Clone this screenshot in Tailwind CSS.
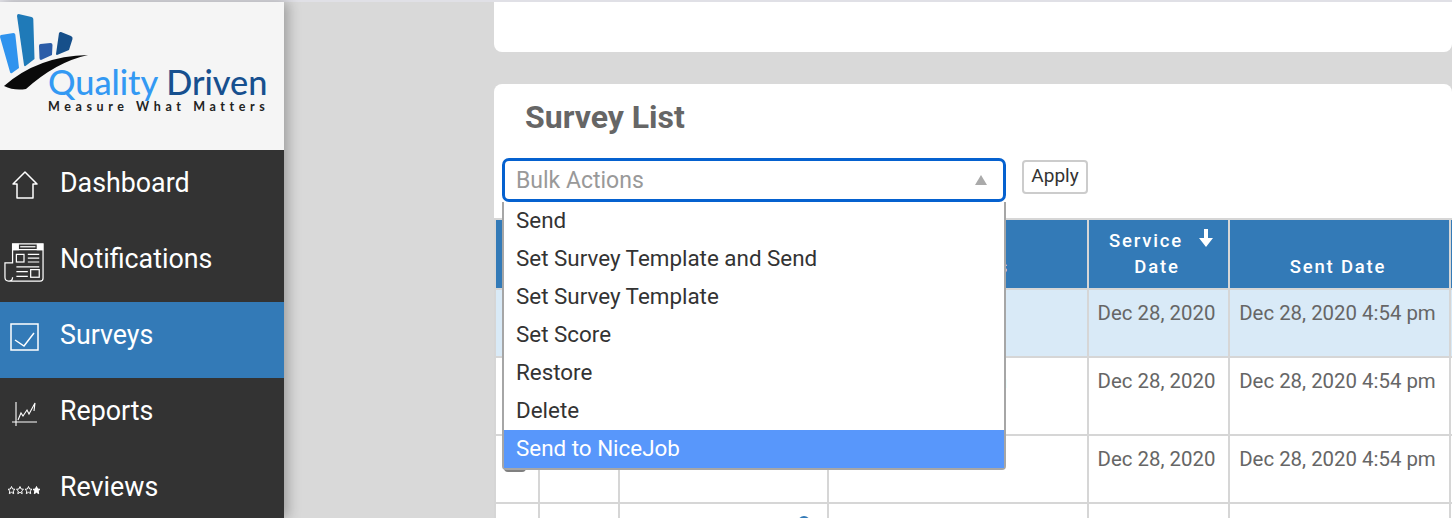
<!DOCTYPE html>
<html lang="en">
<head>
    <meta charset="UTF-8" />
    <meta name="viewport" content="width=device-width, initial-scale=1" />
    <title>Survey List</title>
    <script src="https://cdn.jsdelivr.net/npm/@tailwindcss/browser@4"></script>
</head>
<body class="h-[518px] overflow-hidden bg-[#d9d9d9] font-['Roboto',sans-serif]">
    <div class="h-[2px] bg-[#e0e0e6]"></div>
    <div class="flex h-[516px]">
        <!-- sidebar -->
        <aside class="w-[284px] shrink-0 overflow-hidden bg-[#333333] shadow-[4px_0_12px_rgba(0,0,0,0.28)] z-10">
            <div class="relative h-[148px] bg-[#f5f5f5] pl-[48px] pt-[65px]">
                <svg class="absolute left-0 top-0" width="92" height="90" viewBox="0 0 92 90">
                    <path d="M1 33 L13.500 31 Q15 31 15.300 32.500 L19 66 L12 71 Q10.500 72 10 70 L0 35 Q0 33 1 33 Z" fill="#2f93ee" />
                    <path d="M18.500 12 L31.500 15 Q33.300 15.500 33.300 17 L34.500 57 L25.500 64 Q24 64.500 24 63 L17 14 Q17 12 18.500 12 Z" fill="#1f7ab8" />
                    <path d="M40.500 42 L50.500 41 Q52.500 41 52.500 43 L52 53 L41 58 Q39.500 58 39.500 56 L39 44 Q39 42 40.500 42 Z" fill="#2b5ca8" />
                    <path d="M61 30 L71 34 Q73 35 72.500 37 L69 48 L57 53 Q56 53 56 52 L59 31 Q60 29.500 61 30 Z" fill="#164f8a" />
                    <path d="M4 84 Q38 54 88 53 Q56 60 26 87 Q14 89 4 84 Z" fill="#0a0a0a" />
                </svg>
                <div class="relative font-['Lato',sans-serif] text-[34.300px] leading-[30px] font-medium whitespace-nowrap"><span class="text-[#3399f3]">Quality</span> <span class="text-[#17508f]">Driven</span></div>
                <div class="relative mt-[2px] font-['Lato',sans-serif] text-[12.500px] leading-[16px] font-bold tracking-[4.600px] text-[#222222] whitespace-nowrap">Measure What Matters</div>
            </div>
            <nav class="text-white text-[26.800px]">
                <a class="flex h-[76px] items-center" href="#">
                    <span class="flex w-[60px] justify-center pr-[11px]">
                        <svg class="mb-[6px]" width="26" height="28" viewBox="0 0 26 28" fill="none" stroke="white" stroke-width="1.500"><path d="M13 1 L25 13 H21 V27 H5 V13 H1 Z" stroke-linejoin="round" /></svg>
                    </span>
                    <span class="pb-[10px]">Dashboard</span>
                </a>
                <a class="flex h-[76px] items-center" href="#">
                    <span class="flex w-[60px] justify-center pr-[12px]">
                        <svg class="mb-[4px]" width="40" height="40" viewBox="0 0 42 42" fill="none" stroke="white" stroke-width="1.300">
                            <path d="M9 2 H41 V38 Q41 41 38 41 H5 Q1 41 1 37 V22 H9 Z M9 37 Q9 41 5 41" />
                            <path d="M9 8 H41" />
                            <path d="M9.500 2.500 H15 V8 H9.500 Z M35 2.500 H40.500 V8 H35 Z" fill="white" />
                            <path d="M17 5 H33" />
                            <rect x="13" y="13" width="8" height="8" />
                            <path d="M25 13 H37 M25 17 H37 M25 21 H37 M13 26 H37 M13 31 H25 M13 36 H25" />
                            <rect x="28" y="29" width="9" height="8" />
                        </svg>
                    </span>
                    <span class="pb-[10px]">Notifications</span>
                </a>
                <a class="flex h-[76px] items-center bg-[#337ab7]" href="#">
                    <span class="flex w-[60px] justify-center pr-[12px]">
                        <svg class="mb-[7px]" width="29" height="28" viewBox="0 0 29 28" fill="none" stroke="white" stroke-width="1.500"><rect x="1" y="1" width="27" height="26" /><path d="M5 17 L14 23 L24 10" /></svg>
                    </span>
                    <span class="pb-[10px]">Surveys</span>
                </a>
                <a class="flex h-[76px] items-center" href="#">
                    <span class="flex w-[60px] justify-center pr-[11px]">
                        <svg class="mb-[4px]" width="26" height="26" viewBox="0 0 26 26" fill="none" stroke="white" stroke-width="1.100"><path d="M4 1 V25 M0 21 H25" /><path d="M6 19 L9 12 L11 15 L15 9 L17 13 L23 2 L22 10" /></svg>
                    </span>
                    <span class="pb-[10px]">Reports</span>
                </a>
                <a class="flex h-[76px] items-center" href="#">
                    <span class="flex w-[60px] justify-center pr-[13px]">
                        <svg class="mb-[4px]" width="34" height="11" viewBox="0 0 34 11" fill="none" stroke="white" stroke-width="1">
                            <path d="M4.500 1.500 L5.600 4 L8 4.300 L6.200 6 L6.700 8.700 L4.500 7.300 L2.300 8.700 L2.800 6 L1 4.300 L3.400 4 Z" />
                            <path d="M13 1.500 L14.100 4 L16.500 4.300 L14.700 6 L15.200 8.700 L13 7.300 L10.800 8.700 L11.300 6 L9.500 4.300 L11.900 4 Z" />
                            <path d="M21.500 1.500 L22.600 4 L25 4.300 L23.200 6 L23.700 8.700 L21.500 7.300 L19.300 8.700 L19.800 6 L18 4.300 L20.400 4 Z" />
                            <path d="M29.500 1.500 L30.600 4 L33 4.300 L31.200 6 L31.700 8.700 L29.500 7.300 L27.300 8.700 L27.800 6 L26 4.300 L28.400 4 Z" fill="white" />
                        </svg>
                    </span>
                    <span class="pb-[10px]">Reviews</span>
                </a>
            </nav>
        </aside>

        <!-- main -->
        <main class="relative flex-1 min-w-0 overflow-hidden pl-[210px]">
            <div class="h-[50px] rounded-b-lg bg-white"></div>
            <div class="mt-[32px] overflow-hidden rounded-t-lg bg-white">
                <h1 class="pl-[31px] pt-[14px] text-[32px] leading-[38px] font-bold text-[#666666]">Survey List</h1>
                <div class="h-[82px]"></div>
                <table class="w-[1155px] table-fixed border-separate border-spacing-0 text-[20.400px] text-[#666666]">
                    <colgroup>
                        <col class="w-[44px]" /><col class="w-[80px]" /><col class="w-[209px]" /><col class="w-[260px]" /><col class="w-[141px]" /><col class="w-[221px]" /><col class="w-[200px]" />
                    </colgroup>
                    <thead class="bg-[#337ab7] text-white text-[18.500px] tracking-[1.800px]">
                        <tr class="h-[70px] [&>th]:border-l-2 [&>th]:border-t-2 [&>th]:border-[#d6d6d6] [&>th]:align-bottom [&>th]:pb-[8px] [&>th]:pr-[3px] [&>th]:font-medium [&>th]:leading-[26px]">
                            <th></th><th></th><th></th>
                            <th>Recipients</th>
                            <th>
                                <span class="flex items-center justify-center gap-[16px] pl-[8px]">Service
                                    <svg class="mb-[6px]" width="14" height="19" viewBox="0 0 14 19" fill="white"><path d="M5 0 H9 V9 H14 L7 18 L0 9 H5 Z" /></svg>
                                </span>
                                Date
                            </th>
                            <th>Sent Date</th>
                            <th></th>
                        </tr>
                    </thead>
                    <tbody class="[&_td]:border-l-2 [&_td]:border-t-2 [&_td]:border-[#d6d6d6] [&_td]:align-top [&_td]:pt-[11px] [&_td]:pr-[4px] [&_td]:text-center [&_td]:leading-[24px]">
                        <tr class="h-[68px] bg-[#d9eaf7]">
                            <td><span class="mx-auto mt-[3px] block h-[22px] w-[22px] rounded-[4px] border-2 border-[#808080]"></span></td>
                            <td></td><td></td><td></td><td>Dec 28, 2020</td><td>Dec 28, 2020 4:54 pm</td><td></td>
                        </tr>
                        <tr class="h-[78px]">
                            <td><span class="mx-auto mt-[3px] block h-[22px] w-[22px] rounded-[4px] border-2 border-[#808080]"></span></td>
                            <td></td><td></td><td class="!pr-[80px] !text-right">n</td><td>Dec 28, 2020</td><td>Dec 28, 2020 4:54 pm</td><td></td>
                        </tr>
                        <tr class="h-[68px]">
                            <td><span class="mx-auto mt-[3px] block h-[22px] w-[22px] rounded-[4px] border-2 border-[#808080]"></span></td>
                            <td></td><td></td><td></td><td>Dec 28, 2020</td><td>Dec 28, 2020 4:54 pm</td><td></td>
                        </tr>
                        <tr class="h-[68px]">
                            <td></td><td></td>
                            <td class="!pr-[17px]"><span class="mt-[1px] ml-auto block h-[12px] w-[12px] rounded-full bg-[#337ab7]"></span></td>
                            <td></td><td></td><td></td><td></td>
                        </tr>
                    </tbody>
                </table>
            </div>

            <!-- bulk action select + open dropdown, sits over the table -->
            <div class="absolute left-[218px] top-[156px] w-[504px] text-[22.400px]">
                <div class="flex h-[44px] items-center justify-between rounded-[7px] border-[3px] border-[#0561cf] bg-white pl-[11px] pr-[16px] text-[#999999]">
                    <span class="pt-[2px] text-[23px]">Bulk Actions</span>
                    <span class="h-0 w-0 border-x-[6.500px] border-b-[10px] border-x-transparent border-b-[#aaaaaa]"></span>
                </div>
                <ul class="rounded-b-[4px] border-x-2 border-b-2 border-[#a6a6a6] bg-white text-[#333333] [&>li]:flex [&>li]:h-[38px] [&>li]:items-center [&>li]:pl-[12px]">
                    <li>Send</li>
                    <li>Set Survey Template and Send</li>
                    <li>Set Survey Template</li>
                    <li>Set Score</li>
                    <li>Restore</li>
                    <li>Delete</li>
                    <li class="bg-[#5897fb] text-white">Send to NiceJob</li>
                </ul>
            </div>
            <button class="absolute left-[738px] top-[158px] h-[34px] w-[66px] rounded-[4px] border-2 border-[#cccccc] bg-white pb-[2px] text-[19px] text-[#333333]">Apply</button>
        </main>
    </div>
</body>
</html>
